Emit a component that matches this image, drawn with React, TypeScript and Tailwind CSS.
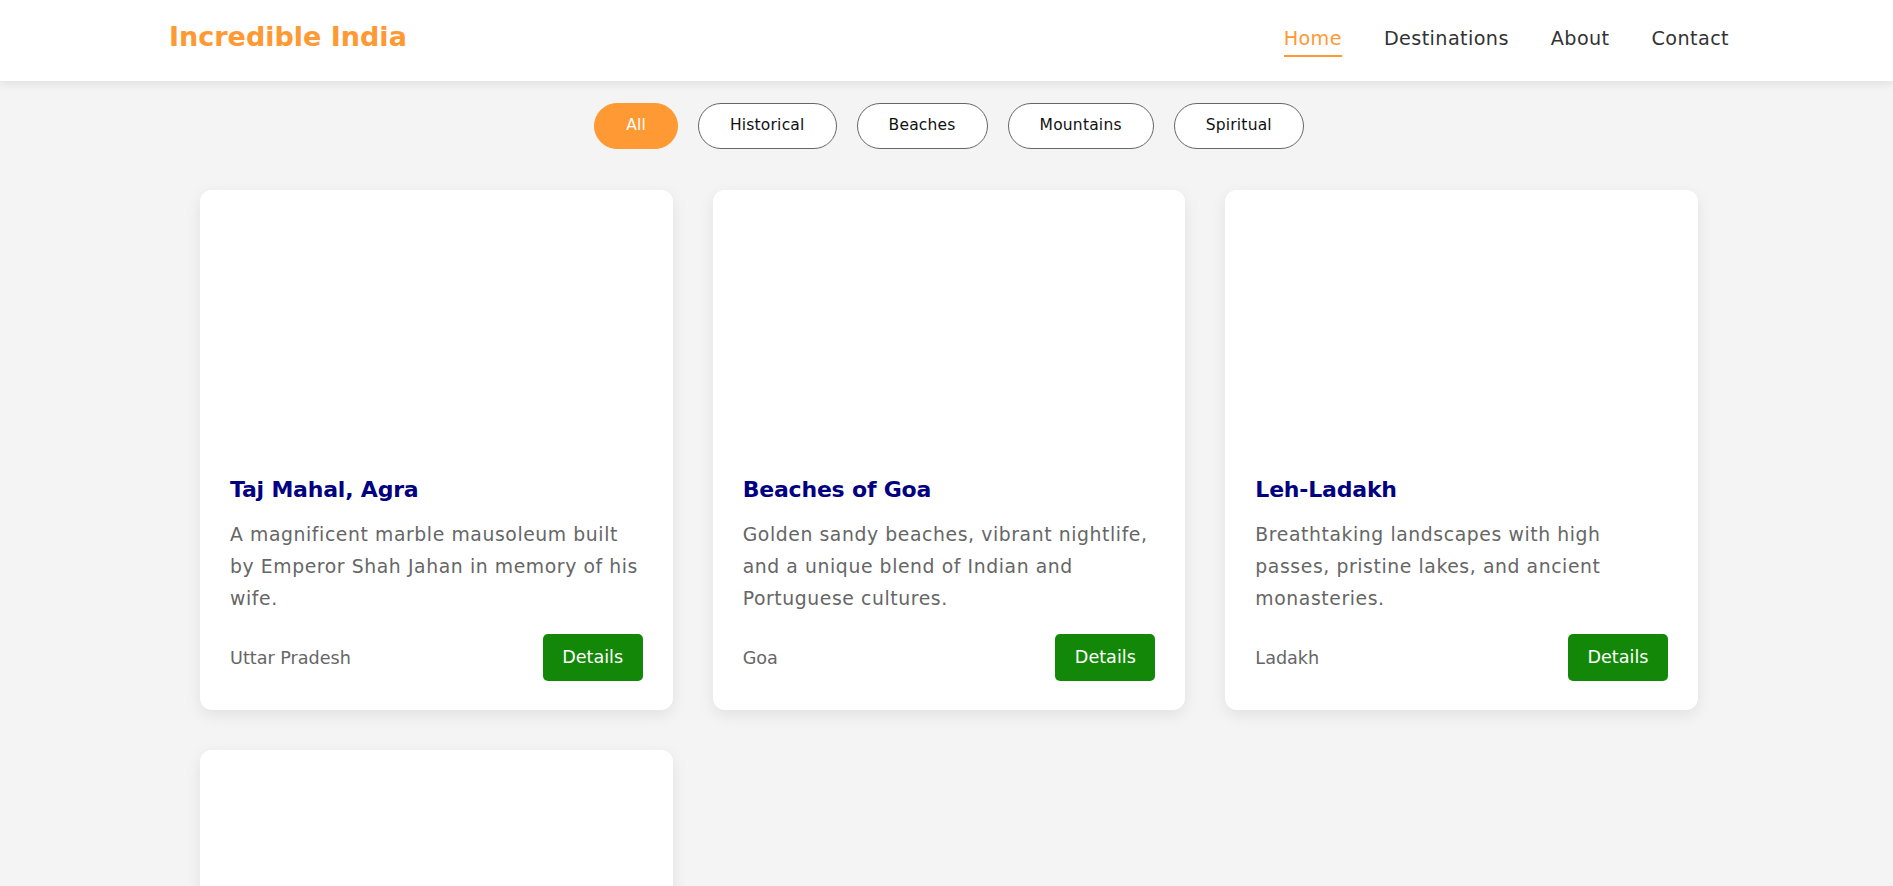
import React, { useState } from 'react';

type Category = 'All' | 'Historical' | 'Beaches' | 'Mountains' | 'Spiritual';

interface Destination {
  id: number;
  name: string;
  description: string;
  location: string;
  category: Category;
}

const destinations: Destination[] = [
  {
    id: 1,
    name: 'Taj Mahal, Agra',
    description: 'A magnificent marble mausoleum built by Emperor Shah Jahan in memory of his wife.',
    location: 'Uttar Pradesh',
    category: 'Historical',
  },
  {
    id: 2,
    name: 'Beaches of Goa',
    description: 'Golden sandy beaches, vibrant nightlife, and a unique blend of Indian and Portuguese cultures.',
    location: 'Goa',
    category: 'Beaches',
  },
  {
    id: 3,
    name: 'Leh-Ladakh',
    description: 'Breathtaking landscapes with high passes, pristine lakes, and ancient monasteries.',
    location: 'Ladakh',
    category: 'Mountains',
  },
  {
    id: 4,
    name: 'Varanasi',
    description: 'One of the oldest living cities in the world, known for its ghats along the sacred Ganges.',
    location: 'Uttar Pradesh',
    category: 'Spiritual',
  },
];

const filters: Category[] = ['All', 'Historical', 'Beaches', 'Mountains', 'Spiritual'];
const navLinks = ['Home', 'Destinations', 'About', 'Contact'];

const font = { fontFamily: '"DejaVu Sans", "Noto Sans", sans-serif' };

const DestinationCard: React.FC<{ item: Destination }> = ({ item }) => (
  <div className="bg-white rounded-[12px] overflow-hidden shadow-[0_5px_15px_rgba(0,0,0,0.08)]">
    {/* image slot, blank like the reference */}
    <div className="h-[250px] bg-white" />
    <div className="px-[30px] pt-[32px] pb-[29px]">
      <h3 className="text-[22px] leading-[36px] font-bold text-[#000080] tracking-[-0.2px]">{item.name}</h3>
      <p className="mt-[10.5px] text-[18.8px] leading-[32px] text-[#666666] tracking-[0.6px]">{item.description}</p>
      <div className="mt-[19.5px] flex items-center justify-between">
        <span className="text-[17.6px] leading-[26px] text-[#666666]">{item.location}</span>
        <button className="rounded-[5px] bg-[#138808] px-[19.5px] py-[10px] text-[17.6px] leading-[27px] text-white">
          Details
        </button>
      </div>
    </div>
  </div>
);

const App: React.FC = () => {
  const [active, setActive] = useState<Category>('All');

  const shown = active === 'All' ? destinations : destinations.filter(d => d.category === active);

  return (
    <div className="min-h-screen bg-[#f4f4f4]" style={font}>
      {/* Header */}
      <header className="h-[81px] bg-white shadow-[0_2px_10px_rgba(0,0,0,0.1)] pb-[8px]">
        <div className="mx-auto w-[1565px] pl-[5px] h-full flex items-center justify-between">
          <h1 className="text-[27px] leading-[45px] font-bold text-[#FF9933]">Incredible India</h1>
          <nav className="flex items-center gap-[42px] mt-[4px]">
            {navLinks.map((link, i) => (
              <a
                key={link}
                href="#"
                className={`relative text-[19.2px] leading-[27px] tracking-[0.4px] ${i === 0 ? 'text-[#FF9933]' : 'text-[#333333]'}`}
              >
                {link}
                {i === 0 && <span className="absolute left-0 right-0 -bottom-[4.5px] h-[2px] bg-[#FF9933]" />}
              </a>
            ))}
          </nav>
        </div>
      </header>

      {/* Filters */}
      <div className="mt-[22px] pl-[5px] flex justify-center gap-[20px]">
        {filters.map(f => (
          <button
            key={f}
            onClick={() => setActive(f)}
            className={`h-[46px] px-[31px] rounded-full border text-[15.5px] tracking-[0.2px] ${
              active === f ? 'bg-[#FF9933] border-[#FF9933] text-white' : 'bg-white border-[#666666] text-[#111111]'
            }`}
          >
            {f}
          </button>
        ))}
      </div>

      {/* Cards */}
      <main className="mx-auto w-[1503px] pl-[5px] mt-[41px] pb-[40px] grid grid-cols-3 gap-[40px]">
        {shown.map(item => (
          <DestinationCard key={item.id} item={item} />
        ))}
      </main>
    </div>
  );
};

export default App;
